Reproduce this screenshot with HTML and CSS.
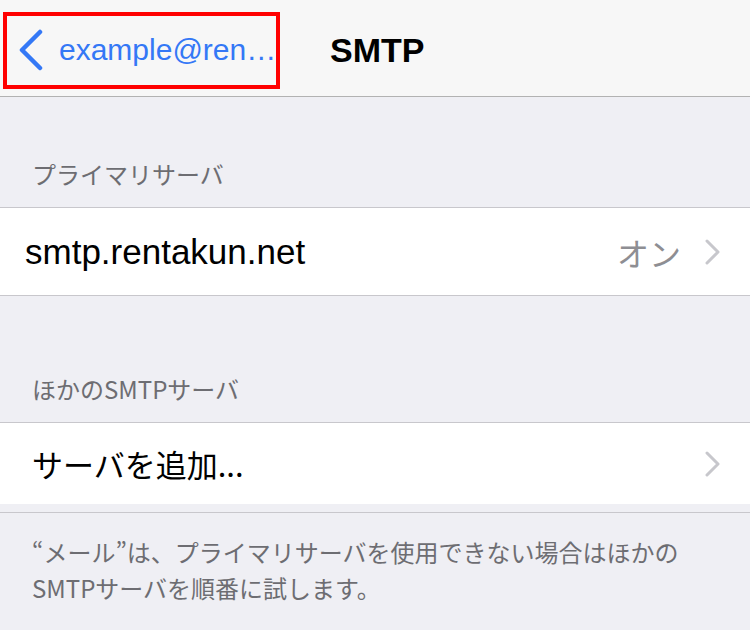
FILE: index.html
```html
<!DOCTYPE html>
<html lang="ja">
<head>
  <meta charset="UTF-8" />
  <meta name="viewport" content="width=device-width, initial-scale=1.0"/>
  <title>SMTP</title>
  <link rel="stylesheet" href="styles.css">
</head>
<body>
  <div class="navbar">
    <div class="back-box">
      <svg class="back-icon" width="26" height="42" viewBox="0 0 26 42">
        <path d="M22 3 L4 21 L22 39" fill="none" stroke="#3478f6" stroke-width="4.5" stroke-linecap="round" stroke-linejoin="round"/>
      </svg>
      <span class="back-label">example@ren…</span>
    </div>
    <div class="nav-title">SMTP</div>
  </div>

  <div class="section-header first">プライマリサーバ</div>
  <div class="row primary">
    <span class="row-label">smtp.rentakun.net</span>
    <span class="row-value">オン</span>
    <svg class="chevron" width="16" height="26" viewBox="0 0 16 26">
      <path d="M2 2 L13 13 L2 24" fill="none" stroke="#c7c7cc" stroke-width="3" stroke-linecap="round" stroke-linejoin="round"/>
    </svg>
  </div>

  <div class="section-header">ほかのSMTPサーバ</div>
  <div class="row add">
    <span class="row-label jp">サーバを追加...</span>
    <svg class="chevron" width="16" height="26" viewBox="0 0 16 26">
      <path d="M2 2 L13 13 L2 24" fill="none" stroke="#c7c7cc" stroke-width="3" stroke-linecap="round" stroke-linejoin="round"/>
    </svg>
  </div>

  <div class="footer">
    <p>“メール”は、プライマリサーバを使用できない場合はほかの<br>SMTPサーバを順番に試します。</p>
  </div>
</body>
</html>
```

FILE: styles.css
```css
* {
  box-sizing: border-box;
}

body {
  margin: 0;
  background: #efeff4;
  font-family: "Liberation Sans", "Noto Sans CJK JP", sans-serif;
  color: #000;
}

.navbar {
  display: flex;
  align-items: center;
  height: 97px;
  padding: 4px 0 0 3px;
  background: #f7f7f7;
  border-bottom: 1px solid #b2b2b2;
}

.back-box {
  display: flex;
  align-items: center;
  width: 277px;
  height: 77px;
  border: 4px solid #ff0000;
  padding-left: 11px;
}

.back-icon {
  flex-shrink: 0;
}

.back-label {
  margin-left: 15px;
  font-size: 30px;
  color: #3478f6;
  white-space: nowrap;
}

.nav-title {
  margin-left: 50px;
  font-size: 34px;
  font-weight: bold;
}

.section-header {
  padding: 0 32px 16px;
  display: flex;
  align-items: flex-end;
  font-family: "Noto Sans CJK JP", sans-serif;
  font-size: 24px;
  color: #6d6d72;
  border-bottom: 1px solid #c8c7cc;
}

.section-header.first {
  height: 111px;
}

.section-header:not(.first) {
  height: 127px;
}

.row {
  display: flex;
  align-items: center;
  background: #fff;
  padding: 0 29px 0 25px;
}

.row.primary {
  height: 88px;
  border-bottom: 1px solid #c8c7cc;
}

.row.add {
  height: 81px;
  padding-left: 32px;
}

.row-label {
  flex: 1;
  font-size: 35px;
}

.row-label.jp {
  font-family: "Noto Sans CJK JP", sans-serif;
  font-size: 31px;
}

.row-value {
  font-family: "Noto Sans CJK JP", sans-serif;
  font-size: 32px;
  color: #8e8e93;
  margin-right: 24px;
}

.footer {
  margin-top: 8px;
  border-top: 1px solid #c8c7cc;
  padding: 21px 32px 0;
}

.footer p {
  margin: 0;
  font-family: "Noto Sans CJK JP", sans-serif;
  font-size: 24px;
  line-height: 36px;
  color: #6d6d72;
}
```
